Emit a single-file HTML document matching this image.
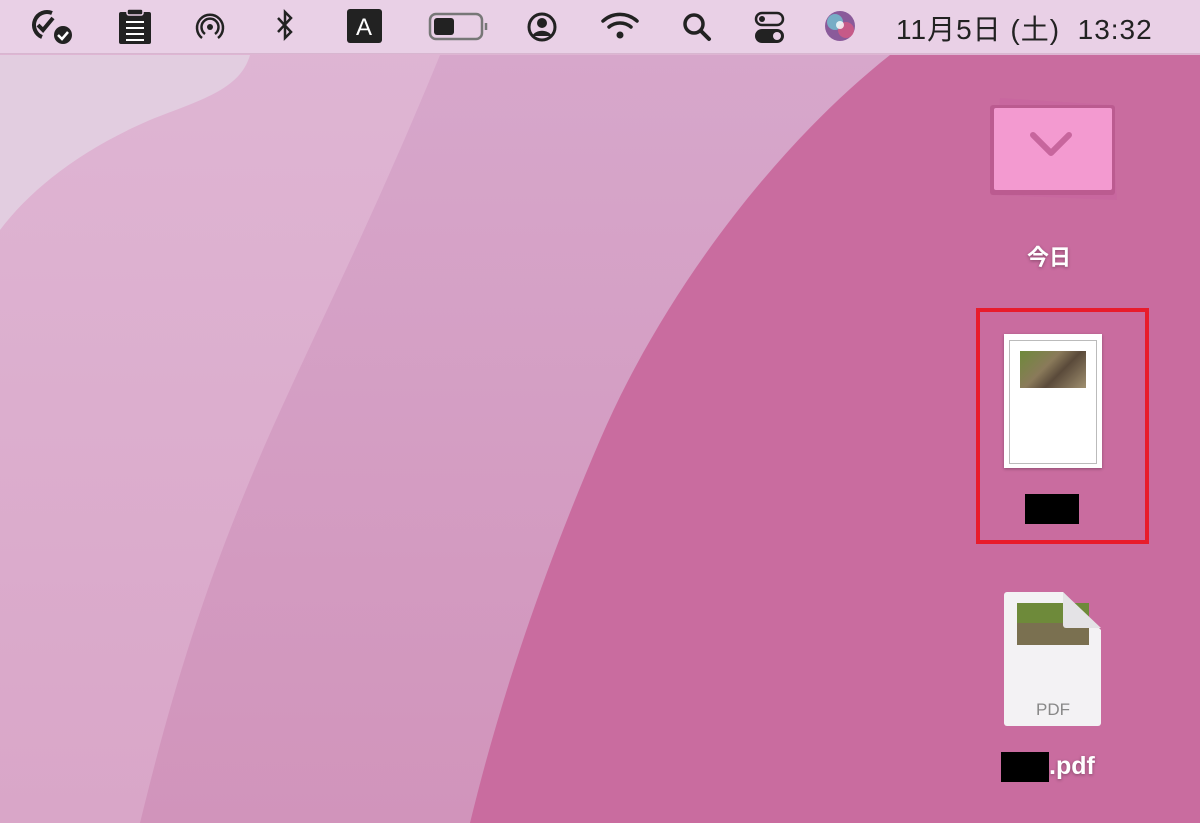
<!DOCTYPE html>
<html><head><meta charset="utf-8"><style>
body{margin:0;width:1200px;height:823px;overflow:hidden;font-family:"Liberation Sans","Noto Sans CJK JP",sans-serif;position:relative;background:#dcb4d2}
svg.bg{position:absolute;left:0;top:0}
.bar{position:absolute;left:0;top:0;width:1200px;height:53px;background:#e9d0e6;border-bottom:1px solid #d8b6d0}
.ic{position:absolute;top:0}
.time{position:absolute;left:896px;top:8px;font-size:28px;color:#222;letter-spacing:1px;white-space:nowrap}
.lbl{position:absolute;color:#fff;font-weight:bold;font-size:22px;text-shadow:0 1px 3px rgba(0,0,0,.35)}
</style></head><body>
<svg class="bg" width="1200" height="823">
<defs>
<linearGradient id="g2" x1="0" y1="0" x2="0" y2="1"><stop offset="0" stop-color="#dfb6d4"/><stop offset="1" stop-color="#d9a6c8"/></linearGradient>
<linearGradient id="g3" x1="0" y1="0" x2="0" y2="1"><stop offset="0" stop-color="#d7a7cb"/><stop offset="1" stop-color="#d194bb"/></linearGradient>
</defs>
<rect width="1200" height="823" fill="url(#g2)"/>
<path d="M0 55 L250 55 C240 90 200 100 150 120 C80 150 30 190 0 230 Z" fill="#e2cde0"/>
<path d="M440 55 L890 55 L890 823 L140 823 C170 700 200 600 250 480 C300 360 360 250 440 55 Z" fill="url(#g3)"/>
<path d="M890 55 C770 150 660 300 600 440 C540 580 500 700 470 823 L1200 823 L1200 55 Z" fill="#c96c9f"/>
</svg>
<div class="bar"></div>
<svg class="ic" width="880" height="53">
<g fill="none" stroke="#222" stroke-width="4">
<path d="M52 13 A12 12 0 1 0 42 37"/><path d="M38 25 l5 5 l10 -12"/>
</g>
<circle cx="63" cy="35" r="9" fill="#222"/><path d="M58 35 l4 4 l6 -7" stroke="#fff" stroke-width="2.5" fill="none"/>
<rect x="119" y="12" width="32" height="32" rx="2" fill="#222"/><rect x="127" y="9" width="16" height="6" rx="2" fill="#222" stroke="#e9d0e6" stroke-width="1.5"/>
<path d="M126 22h18M126 28h18M126 34h18M126 40h18" stroke="#fff" stroke-width="2"/>
<g fill="none" stroke="#222" stroke-width="2.5"><path d="M202 38 A13 13 0 1 1 218 38"/><path d="M205 34 A8.5 8.5 0 1 1 215 34"/></g><circle cx="210" cy="27" r="3" fill="#222"/>
<path d="M278 18 l13 14 l-6 6 v-26 l6 6 l-13 14" fill="none" stroke="#222" stroke-width="2.5"/>
<rect x="347" y="9" width="35" height="34" rx="3" fill="#222"/><text x="364" y="35" font-size="24" fill="#fff" text-anchor="middle" font-family="Liberation Sans">A</text>
<rect x="430" y="14" width="52" height="25" rx="6" fill="none" stroke="#777" stroke-width="2.5"/><rect x="434" y="18" width="20" height="17" rx="3" fill="#222"/><path d="M486 23v7" stroke="#777" stroke-width="2.5"/>
<circle cx="542" cy="27" r="13" fill="none" stroke="#222" stroke-width="3"/><circle cx="542" cy="23" r="5" fill="#222"/><path d="M532 36 C536 29 548 29 552 36" fill="#222"/>
</svg>
<svg class="ic" style="left:600px" width="300" height="53">
<g fill="none" stroke="#222" stroke-width="3.5" stroke-linecap="round"><path d="M3 21 A25 25 0 0 1 37 21"/><path d="M9 27 A17 17 0 0 1 31 27"/></g><circle cx="20" cy="35" r="3.5" fill="#222"/>
<circle cx="94" cy="24" r="9" fill="none" stroke="#222" stroke-width="3.5"/><path d="M101 31 l8 8" stroke="#222" stroke-width="4" stroke-linecap="round"/>
<rect x="156" y="13" width="27" height="12" rx="6" fill="none" stroke="#222" stroke-width="2.5"/><circle cx="162" cy="19" r="3" fill="#222"/>
<rect x="155" y="29" width="29" height="14" rx="7" fill="#222"/><circle cx="177" cy="36" r="4" fill="#e9d0e6"/>
<circle cx="240" cy="26" r="15" fill="#8a5a9a"/><circle cx="235" cy="22" r="8" fill="#6fd0d8" opacity=".7"/><circle cx="246" cy="30" r="8" fill="#e05a80" opacity=".7"/><circle cx="240" cy="25" r="4" fill="#fff" opacity=".8"/>
</svg>
<div class="time">11月5日 (土)&nbsp; 13:32</div>

<svg style="position:absolute;left:985px;top:95px" width="140" height="110">
<path d="M15 3 L125 10 L132 105 L8 100 Z" fill="#c8679f" opacity=".9"/>
<rect x="5" y="10" width="125" height="90" rx="3" fill="#bb5b90"/>
<rect x="9" y="13" width="118" height="82" rx="2" fill="#f39ad0"/>
<path d="M48 40 l18 18 l18 -18" fill="none" stroke="#c7669d" stroke-width="6" stroke-linecap="round" stroke-linejoin="round"/>
</svg>
<div class="lbl" style="left:1027px;top:240px">今日</div>

<div style="position:absolute;left:976px;top:308px;width:165px;height:228px;border:4px solid #e81c2c"></div>
<div style="position:absolute;left:1004px;top:334px;width:98px;height:134px;background:#fff;box-shadow:0 1px 3px rgba(0,0,0,.3)">
<div style="position:absolute;left:5px;top:6px;width:86px;height:122px;border:1px solid #bbb"></div>
<div style="position:absolute;left:16px;top:17px;width:66px;height:37px;background:linear-gradient(135deg,#6e8a3a,#8a7a5a 40%,#5a4a3a 60%,#a09070)"></div>
</div>
<div style="position:absolute;left:1025px;top:494px;width:54px;height:30px;background:#000"></div>

<svg style="position:absolute;left:1003px;top:590px" width="100" height="138">
<path d="M4 2 H60 L98 40 V133 a3 3 0 0 1 -3 3 H4 a3 3 0 0 1 -3 -3 V5 a3 3 0 0 1 3 -3Z" fill="#f3f2f4"/>
<rect x="14" y="13" width="72" height="42" fill="#7a7050"/>
<rect x="14" y="13" width="72" height="20" fill="#6e8a3a"/>
<path d="M60 2 L60 35 a3 3 0 0 0 3 3 H98 Z" fill="#e4e3e6"/>
<text x="50" y="125" font-size="17" fill="#888" text-anchor="middle" font-family="Liberation Sans">PDF</text>
</svg>
<div style="position:absolute;left:1001px;top:752px;width:48px;height:30px;background:#000"></div>
<div class="lbl" style="left:1049px;top:752px;font-size:25px">.pdf</div>
</body></html>
